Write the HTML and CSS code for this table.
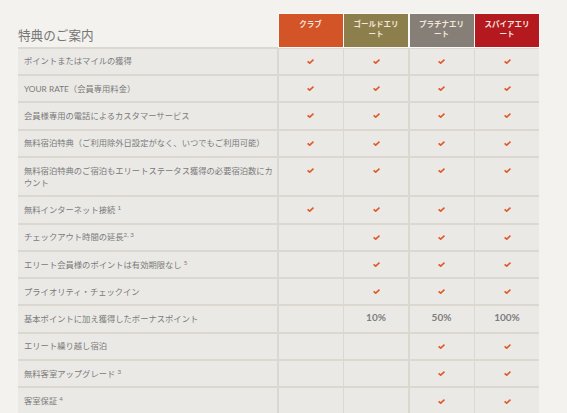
FILE: index.html
```html
<!DOCTYPE html>
<html lang="ja">
<head>
<meta charset="utf-8">
<title>特典のご案内</title>
<link rel="stylesheet" href="styles.css">
</head>
<body>
<svg width="0" height="0" class="defs">
  <defs>
    <symbol id="chk" viewBox="0 0 7 5">
      <polyline points="0.6,2.3 2.7,4.2 6.5,0.7" fill="none" stroke="#e05a28" stroke-width="1.6"/>
    </symbol>
  </defs>
</svg>
<div class="page">
  <div class="table">
    <div class="head">
      <div class="title-cell"><h1 class="title">特典のご案内</h1></div>
      <div class="hcell club">クラブ</div>
      <div class="hcell gold">ゴールドエリート</div>
      <div class="hcell plat">プラチナエリート</div>
      <div class="hcell spire">スパイアエリート</div>
    </div>

    <div class="row">
      <div class="label">ポイントまたはマイルの獲得</div>
      <div class="cell"><svg class="check"><use href="#chk"/></svg></div>
      <div class="cell"><svg class="check"><use href="#chk"/></svg></div>
      <div class="cell"><svg class="check"><use href="#chk"/></svg></div>
      <div class="cell"><svg class="check"><use href="#chk"/></svg></div>
    </div>
    <div class="row">
      <div class="label">YOUR RATE（会員専用料金）</div>
      <div class="cell"><svg class="check"><use href="#chk"/></svg></div>
      <div class="cell"><svg class="check"><use href="#chk"/></svg></div>
      <div class="cell"><svg class="check"><use href="#chk"/></svg></div>
      <div class="cell"><svg class="check"><use href="#chk"/></svg></div>
    </div>
    <div class="row">
      <div class="label">会員様専用の電話によるカスタマーサービス</div>
      <div class="cell"><svg class="check"><use href="#chk"/></svg></div>
      <div class="cell"><svg class="check"><use href="#chk"/></svg></div>
      <div class="cell"><svg class="check"><use href="#chk"/></svg></div>
      <div class="cell"><svg class="check"><use href="#chk"/></svg></div>
    </div>
    <div class="row">
      <div class="label">無料宿泊特典（ご利用除外日設定がなく、いつでもご利用可能）</div>
      <div class="cell"><svg class="check"><use href="#chk"/></svg></div>
      <div class="cell"><svg class="check"><use href="#chk"/></svg></div>
      <div class="cell"><svg class="check"><use href="#chk"/></svg></div>
      <div class="cell"><svg class="check"><use href="#chk"/></svg></div>
    </div>
    <div class="row">
      <div class="label">無料宿泊特典のご宿泊もエリートステータス獲得の必要宿泊数にカウント</div>
      <div class="cell"><svg class="check"><use href="#chk"/></svg></div>
      <div class="cell"><svg class="check"><use href="#chk"/></svg></div>
      <div class="cell"><svg class="check"><use href="#chk"/></svg></div>
      <div class="cell"><svg class="check"><use href="#chk"/></svg></div>
    </div>
    <div class="row">
      <div class="label">無料インターネット接続 <sup>1</sup></div>
      <div class="cell"><svg class="check"><use href="#chk"/></svg></div>
      <div class="cell"><svg class="check"><use href="#chk"/></svg></div>
      <div class="cell"><svg class="check"><use href="#chk"/></svg></div>
      <div class="cell"><svg class="check"><use href="#chk"/></svg></div>
    </div>
    <div class="row">
      <div class="label">チェックアウト時間の延長<sup>2, 3</sup></div>
      <div class="cell"></div>
      <div class="cell"><svg class="check"><use href="#chk"/></svg></div>
      <div class="cell"><svg class="check"><use href="#chk"/></svg></div>
      <div class="cell"><svg class="check"><use href="#chk"/></svg></div>
    </div>
    <div class="row">
      <div class="label">エリート会員様のポイントは有効期限なし <sup>5</sup></div>
      <div class="cell"></div>
      <div class="cell"><svg class="check"><use href="#chk"/></svg></div>
      <div class="cell"><svg class="check"><use href="#chk"/></svg></div>
      <div class="cell"><svg class="check"><use href="#chk"/></svg></div>
    </div>
    <div class="row">
      <div class="label">プライオリティ・チェックイン</div>
      <div class="cell"></div>
      <div class="cell"><svg class="check"><use href="#chk"/></svg></div>
      <div class="cell"><svg class="check"><use href="#chk"/></svg></div>
      <div class="cell"><svg class="check"><use href="#chk"/></svg></div>
    </div>
    <div class="row">
      <div class="label">基本ポイントに加え獲得したボーナスポイント</div>
      <div class="cell"></div>
      <div class="cell pct">10%</div>
      <div class="cell pct">50%</div>
      <div class="cell pct">100%</div>
    </div>
    <div class="row">
      <div class="label">エリート繰り越し宿泊</div>
      <div class="cell"></div>
      <div class="cell"></div>
      <div class="cell"><svg class="check"><use href="#chk"/></svg></div>
      <div class="cell"><svg class="check"><use href="#chk"/></svg></div>
    </div>
    <div class="row">
      <div class="label">無料客室アップグレード <sup>3</sup></div>
      <div class="cell"></div>
      <div class="cell"></div>
      <div class="cell"><svg class="check"><use href="#chk"/></svg></div>
      <div class="cell"><svg class="check"><use href="#chk"/></svg></div>
    </div>
    <div class="row">
      <div class="label">客室保証 <sup>4</sup></div>
      <div class="cell"></div>
      <div class="cell"></div>
      <div class="cell"><svg class="check"><use href="#chk"/></svg></div>
      <div class="cell"><svg class="check"><use href="#chk"/></svg></div>
    </div>
  </div>
</div>
</body>
</html>
```

FILE: styles.css
```css
html, body {
  margin: 0;
  padding: 0;
  background: #f3f2ee;
}

body {
  font-family: Lato, "Noto Sans CJK JP", sans-serif;
  color: #7a7a7a;
  overflow: hidden;
}

.defs {
  position: absolute;
  width: 0;
  height: 0;
}

.page {
  padding: 14.33px 0 0 18px;
}

.table {
  width: max-content;
}

.head,
.row {
  display: grid;
  grid-template-columns: 259px repeat(4, 64px);
  column-gap: 1.5px;
}

.head {
  height: 32.33px;
}

.title-cell {
  display: flex;
  align-items: flex-end;
}

.title {
  margin: 0;
  padding-bottom: 5px;
  font-family: "Noto Sans CJK JP", sans-serif;
  font-weight: 400;
  font-size: 12.6px;
  line-height: 15px;
  color: #767676;
}

.hcell {
  padding: 5px 6px 0;
  font-family: "Noto Sans CJK JP", sans-serif;
  font-weight: 700;
  font-size: 7.5px;
  line-height: 9.5px;
  color: #f3e6df;
  text-align: center;
  box-shadow: 0 0 0 1px #faf9f7;
}

.club { background: #d35427; }
.gold { background: #8d7f4b; }
.plat { background: #857f77; }
.spire { background: #b3191f; }

.row {
  background: #dcd8d0;
  border-top: 2px solid #dcd8d0;
}

.label,
.cell {
  background: #ebe9e6;
  padding: 6.67px 6px;
  font-size: 8.3px;
  line-height: 12px;
}

.label {
  padding-left: 6px;
  padding-right: 4px;
}

.label sup {
  font-size: 6.2px;
  line-height: 0;
  vertical-align: 3px;
}

.cell {
  display: flex;
  justify-content: center;
  align-items: flex-start;
}

.check {
  width: 7px;
  height: 5px;
  margin-top: 3.5px;
}

.pct {
  font-family: Lato, sans-serif;
  font-weight: 700;
  font-size: 10px;
  line-height: 12px;
  color: #7d7d7d;
  padding-top: 5px;
}
```
